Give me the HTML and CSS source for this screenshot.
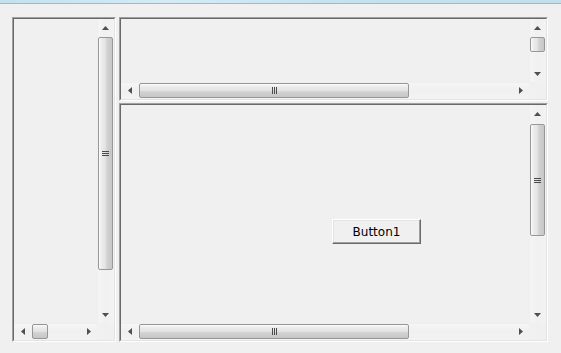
FILE: index.html
```html
<!DOCTYPE html>
<html>
<head>
<meta charset="utf-8">
<link rel="stylesheet" href="styles.css">
</head>
<body>
<div class="caption"></div>
<div class="form">
  <div class="panel left">
    <div class="grid">
      <div class="area"></div>
      <div class="vscroll">
        <div class="sbtn"><svg width="7" height="4" viewBox="0 0 7 4"><polygon points="3.5,0 7,4 0,4" class="arr"/></svg></div>
        <div class="vtrack"><div class="vthumb t-left"><svg width="7" height="5" viewBox="0 0 7 5" class="grip"><rect x="0" y="0" width="7" height="1" fill="#4a4a4a"/><rect x="0" y="2" width="7" height="1" fill="#4a4a4a"/><rect x="0" y="4" width="7" height="1" fill="#4a4a4a"/></svg></div></div>
        <div class="sbtn"><svg width="7" height="4" viewBox="0 0 7 4"><polygon points="0,0 7,0 3.5,4" class="arr"/></svg></div>
      </div>
      <div class="hscroll">
        <div class="sbtn"><svg width="4" height="7" viewBox="0 0 4 7"><polygon points="0,3.5 4,0 4,7" class="arr"/></svg></div>
        <div class="htrack"><div class="hthumb t-small"></div></div>
        <div class="sbtn"><svg width="4" height="7" viewBox="0 0 4 7"><polygon points="0,0 4,3.5 0,7" class="arr"/></svg></div>
      </div>
      <div class="corner"></div>
    </div>
  </div>
  <div class="rightcol">
    <div class="panel top">
      <div class="grid">
        <div class="area"></div>
        <div class="vscroll">
          <div class="sbtn"><svg width="7" height="4" viewBox="0 0 7 4"><polygon points="3.5,0 7,4 0,4" class="arr"/></svg></div>
          <div class="vtrack"><div class="vthumb t-tiny"></div></div>
          <div class="sbtn"><svg width="7" height="4" viewBox="0 0 7 4"><polygon points="0,0 7,0 3.5,4" class="arr"/></svg></div>
        </div>
        <div class="hscroll">
          <div class="sbtn"><svg width="4" height="7" viewBox="0 0 4 7"><polygon points="0,3.5 4,0 4,7" class="arr"/></svg></div>
          <div class="htrack"><div class="hthumb t-wide"><svg width="5" height="7" viewBox="0 0 5 7" class="grip"><rect x="0" y="0" width="1" height="7" fill="#4a4a4a"/><rect x="2" y="0" width="1" height="7" fill="#4a4a4a"/><rect x="4" y="0" width="1" height="7" fill="#4a4a4a"/></svg></div></div>
          <div class="sbtn"><svg width="4" height="7" viewBox="0 0 4 7"><polygon points="0,0 4,3.5 0,7" class="arr"/></svg></div>
        </div>
        <div class="corner"></div>
      </div>
    </div>
    <div class="panel bottom">
      <div class="grid">
        <div class="area canvas">
          <button class="btn">Button1</button>
        </div>
        <div class="vscroll">
          <div class="sbtn"><svg width="7" height="4" viewBox="0 0 7 4"><polygon points="3.5,0 7,4 0,4" class="arr"/></svg></div>
          <div class="vtrack"><div class="vthumb t-mid"><svg width="7" height="5" viewBox="0 0 7 5" class="grip"><rect x="0" y="0" width="7" height="1" fill="#4a4a4a"/><rect x="0" y="2" width="7" height="1" fill="#4a4a4a"/><rect x="0" y="4" width="7" height="1" fill="#4a4a4a"/></svg></div></div>
          <div class="sbtn"><svg width="7" height="4" viewBox="0 0 7 4"><polygon points="0,0 7,0 3.5,4" class="arr"/></svg></div>
        </div>
        <div class="hscroll">
          <div class="sbtn"><svg width="4" height="7" viewBox="0 0 4 7"><polygon points="0,3.5 4,0 4,7" class="arr"/></svg></div>
          <div class="htrack"><div class="hthumb t-wide"><svg width="5" height="7" viewBox="0 0 5 7" class="grip"><rect x="0" y="0" width="1" height="7" fill="#4a4a4a"/><rect x="2" y="0" width="1" height="7" fill="#4a4a4a"/><rect x="4" y="0" width="1" height="7" fill="#4a4a4a"/></svg></div></div>
          <div class="sbtn"><svg width="4" height="7" viewBox="0 0 4 7"><polygon points="0,0 4,3.5 0,7" class="arr"/></svg></div>
        </div>
        <div class="corner"></div>
      </div>
    </div>
  </div>
</div>
</body>
</html>
```

FILE: styles.css
```css
* { box-sizing: border-box; }
html, body { margin: 0; padding: 0; }
body {
  width: 561px;
  height: 353px;
  overflow: hidden;
  background: #f0f0f0;
  font-family: "DejaVu Sans", sans-serif;
}
.caption {
  height: 4px;
  background: linear-gradient(to right, #c3e1ee 0%, #d4ebf5 30%, #c6e2ef 60%, #c3dfec 100%);
  border-bottom: 1px solid #a7b6bf;
}
.form {
  display: flex;
  gap: 3px;
  padding: 13px 0 0 12px;
}
.panel {
  border: 1px solid;
  border-color: #a0a0a0 #ffffff #ffffff #a0a0a0;
}
.grid {
  height: 100%;
  display: grid;
  grid-template-columns: 1fr 17px;
  grid-template-rows: 1fr 17px;
  border: 1px solid;
  border-color: #696969 #e3e3e3 #e3e3e3 #696969;
}
.left { width: 104px; height: 325px; }
.rightcol {
  display: flex;
  flex-direction: column;
  gap: 2px;
  width: 429px;
}
.top { height: 84px; }
.bottom { height: 239px; }
.area { min-width: 0; min-height: 0; }
.canvas { padding: 114px 0 0 211px; }

.vscroll {
  display: flex;
  flex-direction: column;
  background: linear-gradient(to right, #e8e8e8 0, #f5f5f5 1px, #f0f0f0 50%, #f3f3f3 100%);
}
.hscroll {
  display: flex;
  background: linear-gradient(to bottom, #e8e8e8 0, #f5f5f5 1px, #f0f0f0 50%, #f3f3f3 100%);
}
.corner { background: #f0f0f0; }
.sbtn {
  flex: none;
  width: 17px;
  height: 17px;
  display: flex;
  align-items: center;
  justify-content: center;
}
.arr { fill: #4f4f4f; }
.vtrack { flex: 1; min-height: 0; }
.htrack { flex: 1; min-width: 0; display: flex; }
.vthumb {
  width: 15px;
  margin: 1px 0 0 1px;
  border: 1px solid #979797;
  border-radius: 2px;
  background: linear-gradient(to right, #fbfbfb 0, #ececec 20%, #e2e2e2 50%, #d2d2d2 60%, #c6c6c6 100%);
  display: flex;
  align-items: center;
  justify-content: center;
}
.hthumb {
  height: 15px;
  margin: 1px 0 0 1px;
  border: 1px solid #979797;
  border-radius: 2px;
  background: linear-gradient(to bottom, #fbfbfb 0, #ececec 20%, #e2e2e2 50%, #d2d2d2 60%, #c6c6c6 100%);
  display: flex;
  align-items: center;
  justify-content: center;
}
.grip { display: block; }
.t-left { height: 233px; }
.t-tiny { height: 15px; }
.t-mid { height: 112px; margin-top: 2px; }
.t-small { width: 16px; }
.t-wide { width: 270px; }

.btn {
  display: block;
  width: 89px;
  height: 25px;
  padding: 0;
  margin: 0;
  background: #f0f0f0;
  border: 1px solid;
  border-color: #ffffff #696969 #696969 #ffffff;
  box-shadow: inset -1px -1px 0 #a0a0a0, inset 1px 1px 0 #e3e3e3;
  font-family: "DejaVu Sans", sans-serif;
  font-size: 12px;
  color: #000;
  text-align: center;
  line-height: 22px;
}
```
